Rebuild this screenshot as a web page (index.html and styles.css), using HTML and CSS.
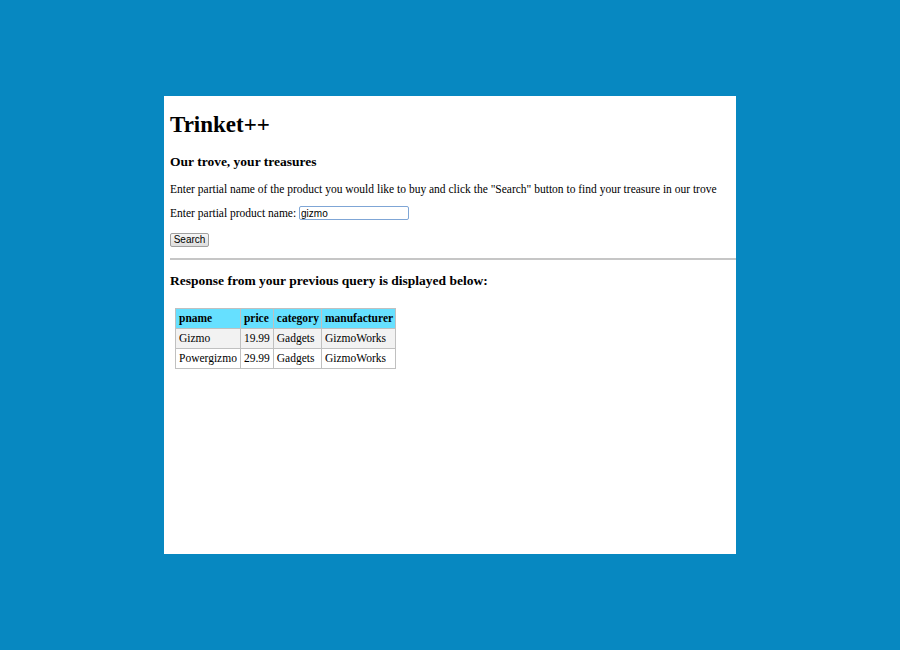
FILE: index.html
```html
<!DOCTYPE html>
<html>
<head>
<meta charset="utf-8">
<link rel="stylesheet" href="styles.css">
</head>
<body>
<div class="panel">
  <h1 class="title">Trinket++</h1>
  <h3 class="subtitle">Our trove, your treasures</h3>
  <p class="text">Enter partial name of the product you would like to buy and click the "Search" button to find your treasure in our trove</p>
  <form class="form">
    <div class="row">
      <label class="label">Enter partial product name: </label><input class="input" type="text" value="gizmo">
    </div>
    <div class="row row-btn">
      <button class="btn" type="button">Search</button>
    </div>
  </form>
  <hr class="rule">
  <h3 class="subtitle2">Response from your previous query is displayed below:</h3>
  <table class="results">
    <tr class="head"><th>pname</th><th>price</th><th>category</th><th>manufacturer</th></tr>
    <tr class="odd"><td>Gizmo</td><td>19.99</td><td>Gadgets</td><td>GizmoWorks</td></tr>
    <tr class="even"><td>Powergizmo</td><td>29.99</td><td>Gadgets</td><td>GizmoWorks</td></tr>
  </table>
</div>
</body>
</html>
```

FILE: styles.css
```css
html, body {
  margin: 0;
  padding: 0;
}
body {
  background: #0788c1;
  height: 650px;
  display: flex;
  align-items: center;
  justify-content: center;
  font-family: "Liberation Serif", "Times New Roman", serif;
  color: #000;
}
.panel {
  width: 566px;
  height: 458px;
  background: #fff;
  padding-left: 6px;
  box-sizing: content-box;
  overflow: hidden;
  font-size: 11.5px;
}
.title {
  font-size: 23px;
  font-weight: bold;
  margin: 15px 0 0 0;
  line-height: 28px;
}
.subtitle {
  font-size: 13.5px;
  margin: 14px 0 0 0;
  line-height: 17px;
}
.text {
  margin: 12px 0 0 0;
  line-height: 14px;
}
.form {
  margin: 0;
}
.row {
  margin-top: 10px;
  display: flex;
  align-items: center;
}
.row-btn {
  margin-top: 13px;
}
.label {
  line-height: 14px;
  white-space: pre;
}
.input {
  width: 106px;
  height: 12px;
  padding: 0 1px;
  border: 1px solid #7fa6d6;
  border-radius: 2px;
  font-family: "Liberation Sans", Arial, sans-serif;
  font-size: 10px;
  margin: 0;
  outline: none;
  color: #000;
}
.btn {
  height: 14px;
  width: 39px;
  padding: 0;
  font-family: "Liberation Sans", Arial, sans-serif;
  font-size: 10px;
  line-height: 12px;
  border: 1px solid #a0a0a0;
  border-radius: 2px;
  background: linear-gradient(#f6f6f6, #dedede);
  margin-left: 0;
  color: #000;
}
.rule {
  border: 0;
  border-top: 2px solid #c6c6c6;
  margin: 11px 0 0 0;
}
.subtitle2 {
  font-size: 13.5px;
  margin: 12px 0 0 0;
  line-height: 17px;
}
.results {
  border-collapse: collapse;
  margin: 19px 0 0 5px;
  font-size: 11.5px;
}
.results th, .results td {
  border: 1px solid #c0c0c0;
  padding: 2px 3px 3px 3px;
  text-align: left;
  line-height: 14px;
  white-space: nowrap;
}
.results th {
  padding-right: 2px;
}
.results .head {
  background: #66e0ff;
}
.results .odd {
  background: #f2f2f2;
}
.results .even {
  background: #fff;
}
```
